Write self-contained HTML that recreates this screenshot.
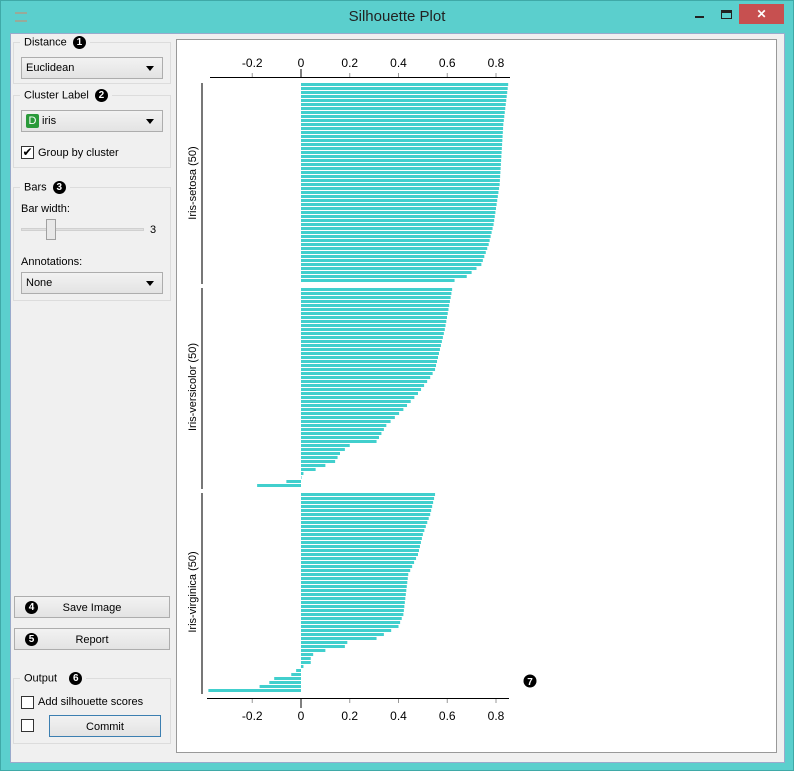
<!DOCTYPE html>
<html><head><style>
*{box-sizing:border-box}
body{margin:0;width:794px;height:771px;background:#5bcfcd;font-family:"Liberation Sans",sans-serif;font-size:11px;color:#000;position:relative;overflow:hidden}
.abs{position:absolute}
#win{left:0;top:0;width:794px;height:771px;border:1px solid #3fa9a7}
.title{left:0;top:8px;width:794px;text-align:center;font-size:15px;color:#222}
#content{left:10px;top:33px;width:775px;height:730px;background:#f0f0f0;border:1px solid #9ac}
.grp{border:1px solid #dcdcdc;background:#f0f0f0}
.lg{background:#f0f0f0;padding:0 4px}
.combo{border:1px solid #adadad;background:linear-gradient(#f2f2f2,#e3e3e3);height:22px;padding:4px 4px}
.combo:after{content:"";position:absolute;right:8px;top:8px;border:4px solid transparent;border-top:5px solid #000;border-bottom:0}
.btn{border:1px solid #adadad;background:linear-gradient(#f2f2f2,#e3e3e3);height:22px;text-align:center;padding-top:5px}
.num{display:inline-block;width:13px;height:13px;border-radius:50%;background:#000;color:#fff;font-size:10px;font-weight:bold;text-align:center;line-height:13px;vertical-align:middle}
.cb{width:13px;height:13px;border:1px solid #333;background:#fff}
</style></head><body>
<div id="win" class="abs"></div>
<div class="abs" style="left:15px;top:12px;width:12px;height:10px;border-top:2px solid #9a9;border-bottom:2px solid #9a9"></div>
<div class="abs title">Silhouette Plot</div>
<div class="abs" style="left:695px;top:16px;width:9px;height:2px;background:#222"></div>
<div class="abs" style="left:721px;top:10px;width:11px;height:9px;border:1px solid #222;border-top-width:3px"></div>
<div class="abs" style="left:739px;top:4px;width:45px;height:20px;background:#c75050;color:#fff;text-align:center;font-size:12px;line-height:20px;font-weight:bold">✕</div>
<div id="content" class="abs"></div>

<div class="abs grp" style="left:13px;top:42px;width:158px;height:42px"></div>
<div class="abs lg" style="left:20px;top:36px">Distance &nbsp;<span class="num">1</span></div>
<div class="abs combo" style="left:21px;top:57px;width:142px">Euclidean</div>

<div class="abs grp" style="left:13px;top:95px;width:158px;height:73px"></div>
<div class="abs lg" style="left:20px;top:89px">Cluster Label &nbsp;<span class="num">2</span></div>
<div class="abs combo" style="left:21px;top:110px;width:142px;height:22px;padding-top:3px"><span style="display:inline-block;width:13px;height:14px;background:#2a9a3a;color:#fff;border-radius:2px;font-size:11px;text-align:center;line-height:14px;vertical-align:middle">D</span> iris</div>
<div class="abs cb" style="left:21px;top:146px;font-size:12px;line-height:11px;text-align:center">✔</div>
<div class="abs" style="left:38px;top:147px">Group by cluster</div>

<div class="abs grp" style="left:13px;top:187px;width:158px;height:114px"></div>
<div class="abs lg" style="left:20px;top:181px">Bars &nbsp;<span class="num">3</span></div>
<div class="abs" style="left:21px;top:203px">Bar width:</div>
<div class="abs" style="left:21px;top:228px;width:123px;height:3px;background:#e0e0e0;border:1px solid #d0d0d0"></div>
<div class="abs" style="left:46px;top:219px;width:10px;height:21px;background:#e8e8e8;border:1px solid #a0a0a0"></div>
<div class="abs" style="left:150px;top:224px">3</div>
<div class="abs" style="left:21px;top:256px">Annotations:</div>
<div class="abs combo" style="left:21px;top:272px;width:142px">None</div>

<div class="abs btn" style="left:14px;top:596px;width:156px"><span class="num" style="position:absolute;left:10px;top:4px">4</span>Save Image</div>
<div class="abs btn" style="left:14px;top:628px;width:156px"><span class="num" style="position:absolute;left:10px;top:4px">5</span>Report</div>

<div class="abs grp" style="left:13px;top:678px;width:158px;height:66px"></div>
<div class="abs lg" style="left:20px;top:672px">Output &nbsp;&nbsp;&nbsp;<span class="num">6</span></div>
<div class="abs cb" style="left:21px;top:696px"></div>
<div class="abs" style="left:38px;top:696px">Add silhouette scores</div>
<div class="abs cb" style="left:21px;top:719px"></div>
<div class="abs btn" style="left:49px;top:715px;width:112px;border-color:#3c7fb1">Commit</div>

<div class="abs" style="left:176px;top:39px;width:601px;height:714px;background:#fff;border:1px solid #999"></div>
<svg class="abs" style="left:0;top:0" width="794" height="771" id="s">
<g font-family="Liberation Sans, sans-serif" font-size="12" fill="#000" text-anchor="middle" id="ax"></g>
<g fill="#41cfcd" id="bars"></g>
<text x="196" y="183" font-size="11" font-family="Liberation Sans" transform="rotate(-90 196 183)" text-anchor="middle">Iris-setosa (50)</text>
<text x="196" y="387" font-size="11" font-family="Liberation Sans" transform="rotate(-90 196 387)" text-anchor="middle">Iris-versicolor (50)</text>
<text x="196" y="592" font-size="11" font-family="Liberation Sans" transform="rotate(-90 196 592)" text-anchor="middle">Iris-virginica (50)</text>
<rect x="201" y="83" width="2" height="201" fill="#777"/>
<rect x="201" y="288" width="2" height="201" fill="#777"/>
<rect x="201" y="493" width="2" height="201" fill="#777"/>
<line x1="210" y1="77.5" x2="510" y2="77.5" stroke="#000"/>
<line x1="207" y1="698.5" x2="509" y2="698.5" stroke="#000"/>
<circle cx="530" cy="681" r="6.5" fill="#000"/><text x="530" y="685" fill="#fff" font-size="10" font-weight="bold" text-anchor="middle" font-family="Liberation Sans">7</text>
</svg>
<script>
var ax=document.getElementById('ax'),bars=document.getElementById('bars'),ns='http://www.w3.org/2000/svg';
function X(v){return 301+v*243.75}
function el(t,a){var e=document.createElementNS(ns,t);for(var k in a)e.setAttribute(k,a[k]);return e}
[-0.2,0,0.2,0.4,0.6,0.8].forEach(function(v){var x=X(v);var l=v==0?'0':v.toFixed(1);
ax.appendChild(el('line',{x1:x,x2:x,y1:v==0?69:73,y2:77,stroke:v==0?'#000':'#999'}));
var t=el('text',{x:x,y:67});t.textContent=l;ax.appendChild(t);
ax.appendChild(el('line',{x1:x,x2:x,y1:699,y2:v==0?708:703,stroke:v==0?'#000':'#999'}));
var t2=el('text',{x:x,y:720});t2.textContent=l;ax.appendChild(t2);});
function interp(pts){var r=[];for(var i=0;i<50;i++){for(var j=0;j<pts.length-1;j++){if(i>=pts[j][0]&&i<=pts[j+1][0]){var a=pts[j],b=pts[j+1];r.push(a[1]+(b[1]-a[1])*(i-a[0])/((b[0]-a[0])||1));break;}}}return r}
var S=interp([[0,0.85],[10,0.83],[25,0.815],[35,0.79],[40,0.77],[45,0.74],[47,0.70],[48,0.68],[49,0.63]]);
var V=interp([[0,0.62],[10,0.59],[20,0.55],[22,0.53],[26,0.48],[30,0.42],[34,0.35],[38,0.31],[39,0.2],[41,0.16],[43,0.14],[44,0.1],[45,0.06],[46,0.01],[47,-0.06],[48,-0.06],[49,-0.18]]);
V[47]=0.0;V[48]=-0.06;
var G=interp([[0,0.55],[5,0.53],[10,0.50],[15,0.48],[20,0.44],[25,0.43],[30,0.42],[33,0.40],[34,0.37],[35,0.34],[36,0.31],[37,0.19],[38,0.18],[39,0.10],[40,0.05],[41,0.04],[42,0.04],[43,0.01],[44,-0.02],[45,-0.04],[46,-0.11],[47,-0.13],[48,-0.17],[49,-0.38]]);
[[S,83],[V,288],[G,493]].forEach(function(g){g[0].forEach(function(v,i){var x0=X(Math.min(0,v)),w=Math.abs(v)*243.75;bars.appendChild(el('rect',{x:x0,y:g[1]+i*4,width:Math.max(w,0.5),height:3}))})});
</script>
</body></html>
